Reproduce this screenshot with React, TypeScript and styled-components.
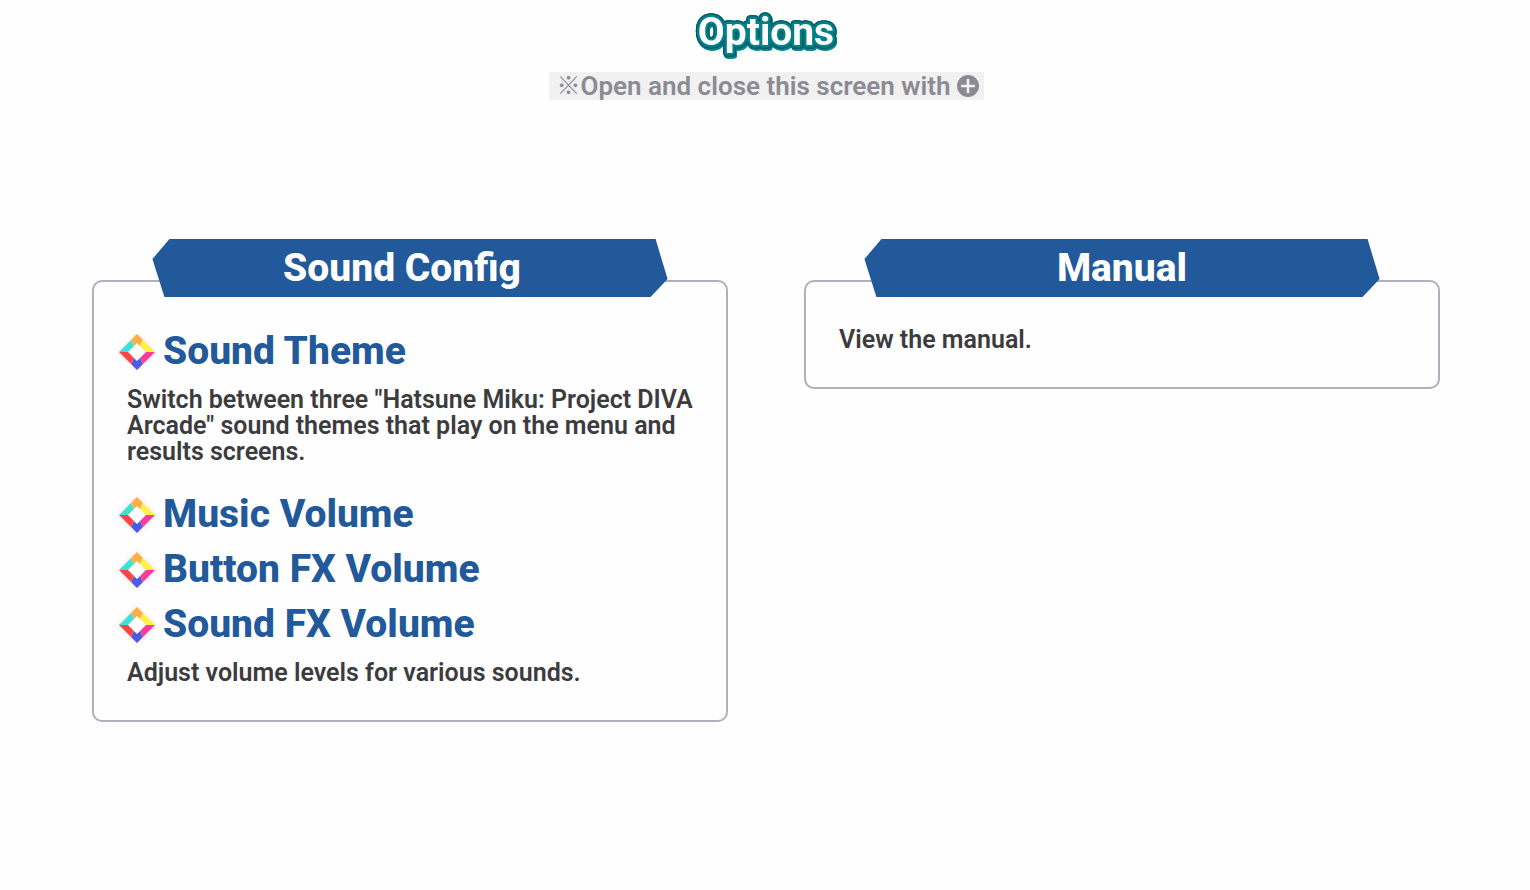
import React from 'react';
import styled, { createGlobalStyle } from 'styled-components';

const Global = createGlobalStyle`
  *, *::before, *::after { box-sizing: border-box; }
  body { margin: 0; background: #fefefe; color: #3c3c3e; font-family: Roboto, "Noto Sans CJK JP", sans-serif; }
`;

const Page = styled.main`
  padding: 8px 90px 40px 92px;
`;

const Header = styled.header`
  display: flex;
  flex-direction: column;
  align-items: center;
  gap: 12px;
`;

const Title = styled.h1`
  display: flex;
  margin: 0;
`;

const TitleArt = styled.svg`
  overflow: visible;
  filter: drop-shadow(1px 0 0 #005a63) drop-shadow(-1px 0 0 #005a63)
    drop-shadow(0 1px 0 #005a63) drop-shadow(0 -1px 0 #005a63)
    drop-shadow(1px 2px 0 #00898f);
`;

const TitleText = styled.text`
  font-size: 39px;
  font-weight: 700;
  text-anchor: middle;
  fill: #fff;
  stroke: #008087;
  stroke-width: 5px;
  stroke-linejoin: round;
  paint-order: stroke;
`;

const Hint = styled.p`
  display: flex;
  align-items: center;
  margin: 0;
  padding: 0 5px 0 8px;
  background: #f1f1f1;
  color: #8c8a94;
  font-size: 26px;
  line-height: 28px;
  font-weight: 600;
`;

const Mark = styled.span`
  font-size: 24px;
  font-weight: 700;
`;

const PlusArt = styled.svg`
  margin-left: 6px;
`;

const Columns = styled.div`
  display: grid;
  grid-template-columns: 1fr 1fr;
  align-items: start;
  gap: 76px;
  margin-top: 139px;
`;

const Panel = styled.section`
  display: flex;
  flex-direction: column;
  align-items: center;
`;

const Ribbon = styled.h2<{ $trail?: number }>`
  z-index: 1;
  width: 81%;
  margin: 0 0 -17px;
  padding-right: ${(p) => p.$trail ?? 0}px;
  background: #22599a;
  clip-path: polygon(17px 0, calc(100% - 12px) 0, 100% 40px, calc(100% - 17px) 100%, 12px 100%, 0 20px);
  color: #fff;
  font-size: 39px;
  line-height: 58px;
  font-weight: 800;
  text-align: center;
`;

const Card = styled.div<{ $top: number }>`
  display: flex;
  flex-direction: column;
  gap: 22px;
  width: 100%;
  padding: ${(p) => p.$top}px 24px 34px 33px;
  border: 2px solid #b1afbe;
  border-radius: 10px;
`;

const Group = styled.div`
  display: flex;
  flex-direction: column;
`;

const Item = styled.h3`
  display: flex;
  align-items: center;
  gap: 5px;
  margin: 0 0 0 -11px;
  color: #22599a;
  font-size: 39px;
  line-height: 55px;
  font-weight: 800;
`;

const Text = styled.p`
  margin: 0;
  font-size: 25px;
  line-height: 26px;
  font-weight: 600;

  ${Item} + & {
    margin-top: 8px;
  }
`;

const GemArt = styled.svg`
  flex: none;
  filter: drop-shadow(0 0 2px rgba(250, 150, 120, 0.35));
`;

const Gem = () => (
  <GemArt width="42" height="42" viewBox="0 0 42 42" aria-hidden="true">
    <path d="M21 3 39 21 21 39 3 21Z" fill="#fff" />
    <path d="M15 9 21 3 27 9 24 15 21 12 18 15Z" fill="#ffae45" />
    <path d="M27 9 39 21H30L24 15Z" fill="#fff04a" />
    <path d="M39 21 27 33 24 27 30 21Z" fill="#fa3b9b" />
    <path d="M27 33 21 39 15 33 18 27 21 30 24 27Z" fill="#4d5be3" />
    <path d="M15 33 3 21H12L18 27Z" fill="#fb4646" />
    <path d="M3 21 15 9 18 15 12 21Z" fill="#3fe0d5" />
  </GemArt>
);

const PlusIcon = () => (
  <PlusArt width="22" height="22" viewBox="0 0 22 22" role="img" aria-label="plus button">
    <circle cx="11" cy="11" r="11" fill="#8c8a94" />
    <path d="M11 4V18M4 11H18" stroke="#f1f1f1" strokeWidth="2.6" />
  </PlusArt>
);

export default function App() {
  return (
    <Page>
      <Global />
      <Header>
        <Title>
          <TitleArt width="144" height="52">
            <TitleText x="72" y="37">Options</TitleText>
          </TitleArt>
        </Title>
        <Hint><Mark>※</Mark>Open and close this screen with<PlusIcon /></Hint>
      </Header>
      <Columns>
        <Panel>
          <Ribbon $trail={16}>Sound Config</Ribbon>
          <Card $top={42}>
            <Group>
              <Item><Gem />Sound Theme</Item>
              <Text>Switch between three "Hatsune Miku: Project DIVA Arcade" sound themes that play on the menu and results screens.</Text>
            </Group>
            <Group>
              <Item><Gem />Music Volume</Item>
              <Item><Gem />Button FX Volume</Item>
              <Item><Gem />Sound FX Volume</Item>
              <Text>Adjust volume levels for various sounds.</Text>
            </Group>
          </Card>
        </Panel>
        <Panel>
          <Ribbon>Manual</Ribbon>
          <Card $top={45}>
            <Text>View the manual.</Text>
          </Card>
        </Panel>
      </Columns>
    </Page>
  );
}
